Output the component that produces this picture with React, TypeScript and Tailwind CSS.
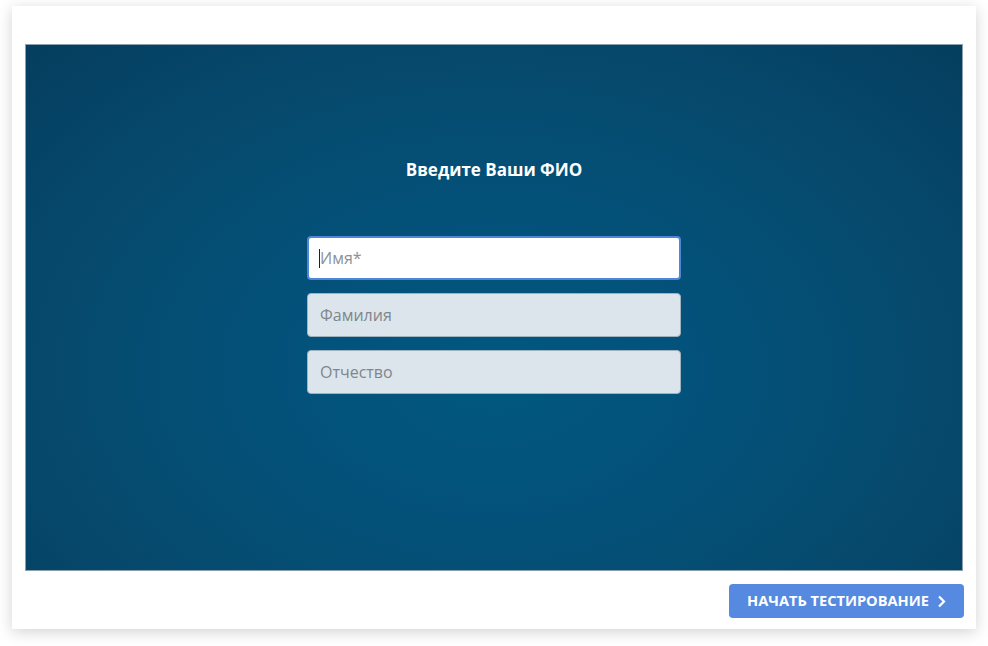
import React from "react";

const font = { fontFamily: '"Open Sans", "Noto Sans", sans-serif' };

function Field({
  placeholder,
  active,
}: {
  placeholder: string;
  active?: boolean;
}) {
  return (
    <div className="relative">
      <input
        className={
          active
            ? "h-[44px] w-full rounded-[4px] border-2 border-[#4f86d6] bg-white px-[11px] text-[16px] text-[#333] outline-none placeholder:text-[#8c9298]"
            : "h-[44px] w-full rounded-[4px] border border-[#9fb2bf] bg-[#dce5eb] px-[12px] text-[16px] text-[#333] outline-none placeholder:text-[#7f868c]"
        }
        placeholder={placeholder}
        readOnly
        style={font}
      />
      {active ? (
        <span className="absolute left-[12px] top-[13px] h-[19px] w-px bg-[#222]" />
      ) : null}
    </div>
  );
}

export default function App() {
  return (
    <div className="min-h-screen bg-white pl-[12px] pt-[6px]" style={font}>
      <div className="flex h-[623px] w-[964px] flex-col bg-white px-[13px] pt-[38px] shadow-[0_3px_14px_rgba(0,0,0,0.18)]">
        <div className="flex h-[527px] w-[938px] flex-col items-center border border-[#8aa0ae] bg-[radial-gradient(ellipse_at_50%_62%,#01587f_0%,#03527b_30%,#064a6e_65%,#053e5f_100%)] pt-[113px]">
          <h1 className="text-[17px] font-bold leading-[24px] text-white">
            Введите Ваши ФИО
          </h1>
          <div className="mt-[54px] flex w-[374px] flex-col gap-[13px]">
            <Field placeholder="Имя*" active />
            <Field placeholder="Фамилия" />
            <Field placeholder="Отчество" />
          </div>
        </div>
        <div className="-mr-px flex justify-end pt-[13px]">
          <button
            className="flex h-[34px] w-[235px] items-center justify-center gap-[8px] rounded-[4px] bg-[#558ae0] text-[14.6px] font-bold uppercase text-white"
            type="button"
          >
            Начать тестирование
            <svg width="9" height="13" viewBox="0 0 9 13" fill="none">
              <path d="M2 1.5 7 6.5 2 11.5" stroke="white" strokeWidth="2.2" />
            </svg>
          </button>
        </div>
      </div>
    </div>
  );
}
